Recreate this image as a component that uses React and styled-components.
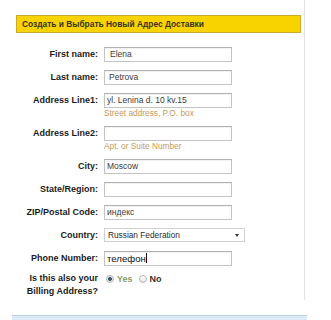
import React from 'react';
import styled, { createGlobalStyle } from 'styled-components';

const GlobalStyle = createGlobalStyle`
  body {
    margin: 0;
    background: #fff;
    font-family: "Liberation Sans", Arial, sans-serif;
  }
`;

const Page = styled.div`
  width: 331px;
  height: 320px;
  overflow: hidden;
`;

const Panel = styled.div`
  width: 305px;
  height: 300px;
  border-right: 1px solid #e2e2e2;
  padding-top: 15px;
  box-sizing: border-box;
`;

const Title = styled.div`
  margin-left: 16px;
  width: 285px;
  height: 18px;
  box-sizing: border-box;
  background: #f8d300;
  border: 1px solid #c9ab2a;
  padding-left: 5px;
  font-size: 8.4px;
  font-weight: bold;
  line-height: 16px;
  color: #3a3420;
`;

const Form = styled.div`
  margin-top: 14px;
  display: grid;
  grid-template-columns: 98px 1fr;
  column-gap: 6px;
  row-gap: 8px;
  align-items: start;
`;

const Label = styled.div`
  text-align: right;
  font-size: 9px;
  font-weight: bold;
  color: #1c1c1c;
  line-height: 15px;
  white-space: nowrap;
`;

const TwoLineLabel = styled(Label)`
  line-height: 13px;
  margin-top: -2px;
`;

const Field = styled.div`
  display: flex;
  flex-direction: column;
`;

const Input = styled.div`
  width: 128px;
  height: 15px;
  box-sizing: border-box;
  border: 1px solid #c4c4c4;
  border-top-color: #b0b0b0;
  box-shadow: inset 0 1px 1px rgba(0, 0, 0, 0.06);
  padding-left: ${(p) => p.$pad || 3}px;
  font-size: ${(p) => (p.$dark ? 9.6 : 8.5)}px;
  line-height: 13px;
  color: ${(p) => (p.$dark ? '#111' : '#3a3a3a')};
  white-space: nowrap;
  overflow: hidden;
`;

const Caret = styled.span`
  display: inline-block;
  width: 1px;
  height: 10px;
  background: #111;
  vertical-align: -1px;
`;

const Hint = styled.div`
  font-size: 8.3px;
  line-height: 9px;
  margin-top: 1px;
  color: #c59a5c;
`;

const Select = styled.div`
  width: 141px;
  height: 14px;
  box-sizing: border-box;
  border: 1px solid #d0d0d0;
  padding: 0 5px 0 3px;
  display: flex;
  align-items: center;
  justify-content: space-between;
  font-size: 8.3px;
  color: #2a2a2a;
`;

const Arrow = styled.span`
  width: 0;
  height: 0;
  border-left: 2px solid transparent;
  border-right: 2px solid transparent;
  border-top: 3px solid #333;
`;

const RadioRow = styled.div`
  display: flex;
  align-items: center;
  height: 15px;
  margin-top: -3px;
  font-size: 9px;
`;

const Radio = styled.span`
  width: 8px;
  height: 8px;
  box-sizing: border-box;
  border-radius: 50%;
  border: 1px solid #b8b8b8;
  background: ${(p) =>
    p.$on
      ? 'radial-gradient(circle, #3d5a66 0 1.6px, #dfe6ea 2.2px)'
      : 'linear-gradient(#ffffff, #e2e2e2)'};
  margin-left: ${(p) => p.$gap || 1}px;
  margin-right: 3px;
`;

const Choice = styled.span`
  font-weight: bold;
  color: ${(p) => (p.$on ? '#8c9a62' : '#333')};
`;

const Footer = styled.div`
  margin: 15px 0 0 12px;
  width: 295px;
  height: 6px;
  background: #dde9f6;
  border-top: 1px solid #bcd0e6;
`;

const rows = [
  { label: 'First name:', value: 'Elena', pad: 5 },
  { label: 'Last name:', value: 'Petrova', pad: 4 },
  { label: 'Address Line1:', value: 'yl. Lenina d. 10 kv.15', hint: 'Street address, P.O. box', pad: 2 },
  { label: 'Address Line2:', value: '', hint: 'Apt. or Suite Number' },
  { label: 'City:', value: 'Moscow', pad: 2 },
  { label: 'State/Region:', value: '' },
  { label: 'ZIP/Postal Code:', value: 'индекс', pad: 2 },
];

export default function App() {
  return (
    <Page>
      <GlobalStyle />
      <Panel>
        <Title>Создать и Выбрать Новый Адрес Доставки</Title>
        <Form>
          {rows.map((r) => (
            <React.Fragment key={r.label}>
              <Label>{r.label}</Label>
              <Field>
                <Input $pad={r.pad}>{r.value}</Input>
                {r.hint && <Hint>{r.hint}</Hint>}
              </Field>
            </React.Fragment>
          ))}
          <Label>Country:</Label>
          <Select>
            <span>Russian Federation</span>
            <Arrow />
          </Select>
          <Label>Phone Number:</Label>
          <Input $pad={2} $dark>
            телефон<Caret />
          </Input>
          <TwoLineLabel>
            Is this also your
            <br />
            Billing Address?
          </TwoLineLabel>
          <RadioRow>
            <Radio $on $gap={2} />
            <Choice $on>Yes</Choice>
            <Radio $gap={6} />
            <Choice>No</Choice>
          </RadioRow>
        </Form>
      </Panel>
      <Footer />
    </Page>
  );
}
